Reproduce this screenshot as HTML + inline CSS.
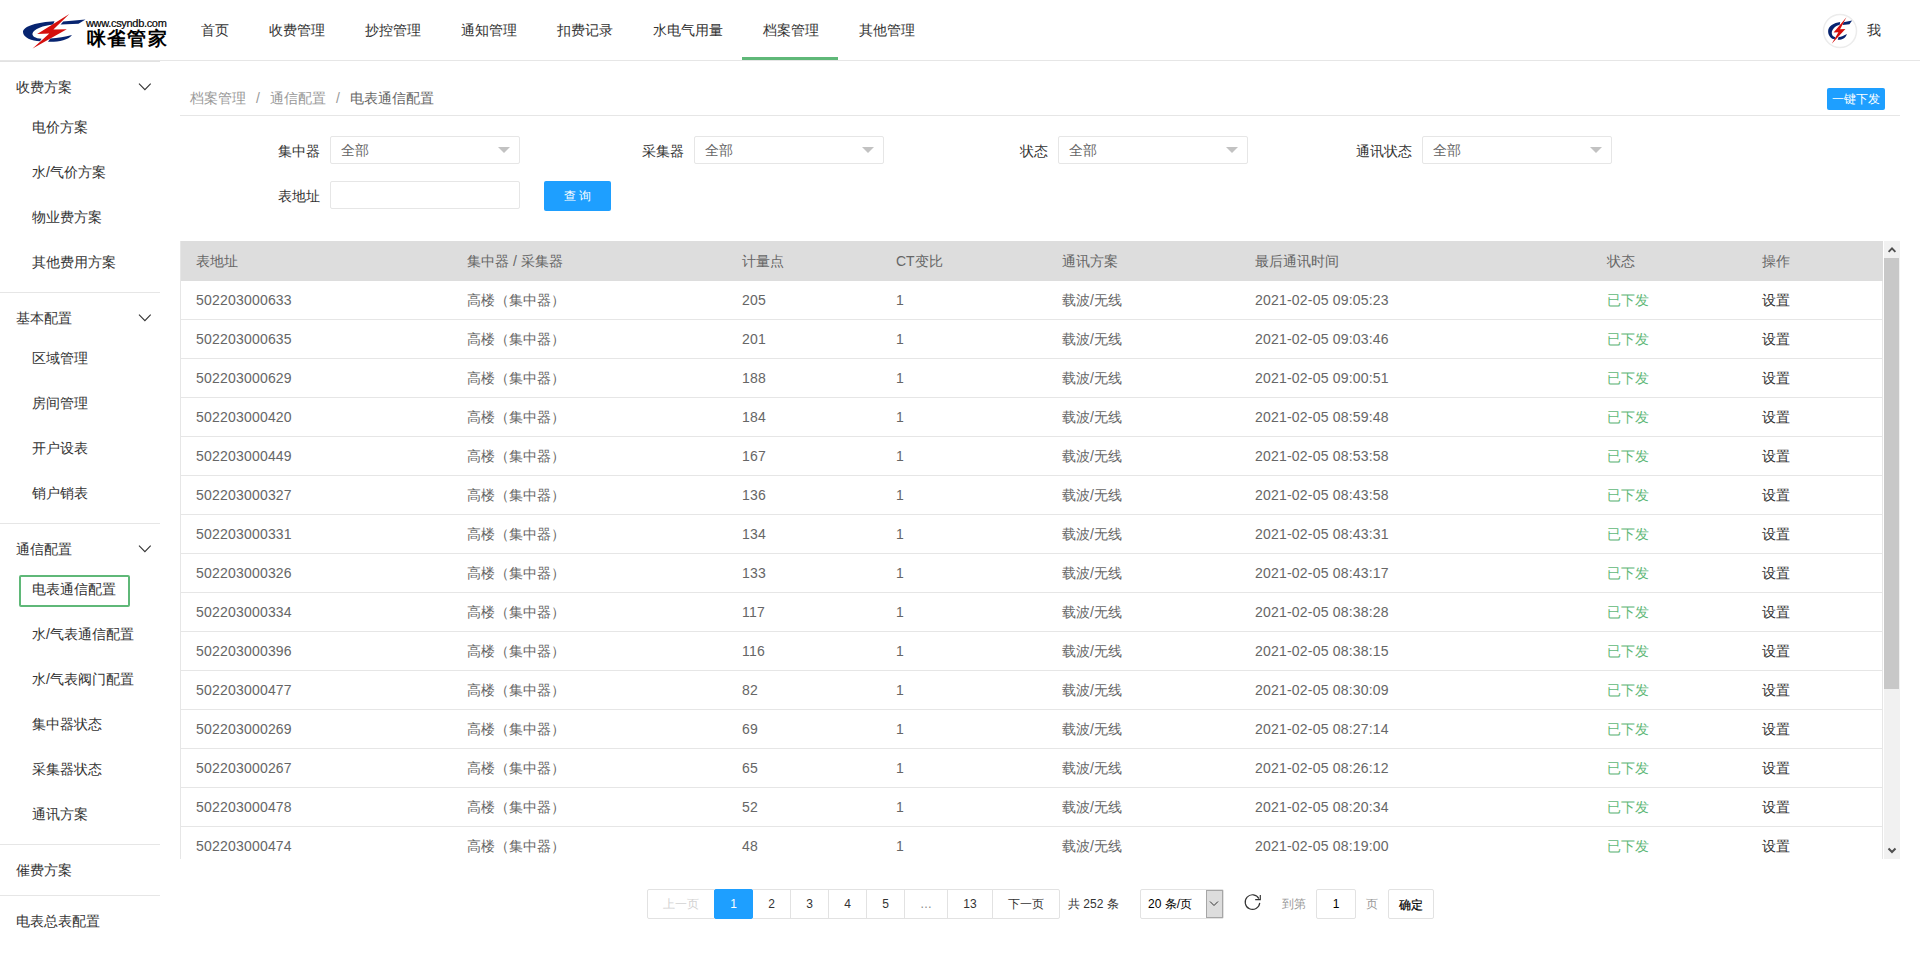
<!DOCTYPE html>
<html><head><meta charset="utf-8">
<style>
*{margin:0;padding:0;box-sizing:border-box}
html,body{width:1920px;height:966px;overflow:hidden;background:#fff;font-family:"Liberation Sans",sans-serif;font-size:14px;color:#333}
.a{position:absolute;white-space:nowrap}
.hdr{position:absolute;left:0;top:0;width:1920px;height:61px;border-bottom:1px solid #e6e6e6;background:#fff}
.nav{position:absolute;top:0;height:60px;line-height:60px;font-size:14px;color:#333}
.navline{position:absolute;left:742px;top:57px;width:96px;height:3px;background:#5fb878}
.side .h{position:absolute;left:16px;font-size:14px;color:#333;line-height:20px}
.side .s{position:absolute;left:32px;font-size:14px;color:#333;line-height:20px}
.side .sep{position:absolute;left:0;width:160px;height:1px;background:#e6e6e6}
.chev{position:absolute;left:138px;width:14px;height:8px;overflow:visible}
.lbl{position:absolute;font-size:14px;color:#333;line-height:20px;text-align:right;width:100px}
.sel{position:absolute;width:190px;height:28px;border:1px solid #e6e6e6;border-radius:2px;background:#fff}
.sel span{position:absolute;left:10px;top:3px;line-height:20px;color:#666;font-size:14px}
.sel i{position:absolute;right:9px;top:10px;width:0;height:0;border-left:6px solid transparent;border-right:6px solid transparent;border-top:6px solid #c2c2c2}
.th{position:absolute;top:241px;left:181px;width:1702px;height:40px;background:#dddddd}
.tt{position:absolute;line-height:20px;font-size:14px;color:#666}
.row{position:absolute;left:181px;width:1701px;height:39px;border-bottom:1px solid #e6e6e6}
.row div{position:absolute;top:9px;line-height:20px;color:#666;font-size:14px}
.pg{position:absolute;top:889px;height:30px;border:1px solid #e2e2e2;line-height:28px;font-size:12px;color:#333;text-align:center;background:#fff}
</style></head><body>
<!-- header -->
<div class="hdr"></div>
<div class="a" style="left:0;top:61px;width:160px;height:1px;background:#e2e2e2"></div>
<svg class="a" style="left:18px;top:10px" width="72" height="42" viewBox="0 0 72 42">
<path fill="#072470" d="M36.5 11.2 C20 12 5 16 5 22 C5 27.5 14 31.3 22 31.3 L23.6 28.8 C17 28.4 14 26 14.5 23.5 C15 19.2 26 15.2 35.2 14.4 Z"/>
<path fill="#072470" d="M30 31.7 C40 32 50 30.5 54 25 C47 26.6 40 28.2 32.3 28.6 Z"/>
<path fill="#072470" d="M45.2 11.4 L67.5 9.5 L60.5 13.7 L42.6 14.6 Z"/>
<path fill="#d40f0c" d="M51.3 4 L19.2 23.9 L31.3 23.5 L14.6 38.4 L48.8 19.2 L35.4 19.6 Z"/>
</svg>
<div class="a" style="left:86px;top:16px;font-size:11px;color:#000;line-height:14px;letter-spacing:-0.32px;-webkit-text-stroke:0.2px #000">www.csyndb.com</div>
<div class="a" style="left:87px;top:27.5px;font-size:18.5px;font-weight:bold;color:#000;line-height:22px;letter-spacing:1.2px">咪雀管家</div>

<div class="nav" style="left:201px">首页</div>
<div class="nav" style="left:269px">收费管理</div>
<div class="nav" style="left:365px">抄控管理</div>
<div class="nav" style="left:461px">通知管理</div>
<div class="nav" style="left:557px">扣费记录</div>
<div class="nav" style="left:653px">水电气用量</div>
<div class="nav" style="left:763px">档案管理</div>
<div class="nav" style="left:859px">其他管理</div>
<div class="navline"></div>

<svg class="a" style="left:1822px;top:13px" width="36" height="36" viewBox="0 0 36 36">
<circle cx="18" cy="18" r="16.5" fill="#fff" stroke="#ececec" stroke-width="1.5"/>
<g transform="matrix(0.384 0 0 0.86 4.2 -0.6)" fill="#072470">
<path d="M36.5 11.2 C20 12 5 16 5 22 C5 27.5 14 31.3 22 31.3 L23.6 28.8 C17 28.4 14 26 14.5 23.5 C15 19.2 26 15.2 35.2 14.4 Z"/>
<path d="M30 31.7 C40 32 50 30.5 54 25 C47 26.6 40 28.2 32.3 28.6 Z"/>
<path d="M45.2 11.4 L67.5 9.5 L60.5 13.7 L42.6 14.6 Z"/>
</g>
<g transform="matrix(0.4 0 0 0.77 3.9 1.2)"><path fill="#d40f0c" d="M51.3 4 L19.2 23.9 L31.3 23.5 L14.6 38.4 L48.8 19.2 L35.4 19.6 Z"/></g>
</svg>
<div class="a" style="left:1867px;top:20px;line-height:20px;font-size:14px;color:#333">我</div>

<!-- sidebar -->
<div class="side">
<div class="h" style="top:77px">收费方案</div>
<svg class="chev" style="top:83px" viewBox="0 0 14 8"><path d="M1 0.6 L6.9 6.6 L12.7 0.6" fill="none" stroke="#333" stroke-width="1.1"/></svg>
<div class="s" style="top:117px">电价方案</div>
<div class="s" style="top:162px">水/气价方案</div>
<div class="s" style="top:207px">物业费方案</div>
<div class="s" style="top:252px">其他费用方案</div>
<div class="sep" style="top:292px"></div>
<div class="h" style="top:308px">基本配置</div>
<svg class="chev" style="top:314px" viewBox="0 0 14 8"><path d="M1 0.6 L6.9 6.6 L12.7 0.6" fill="none" stroke="#333" stroke-width="1.1"/></svg>
<div class="s" style="top:348px">区域管理</div>
<div class="s" style="top:393px">房间管理</div>
<div class="s" style="top:438px">开户设表</div>
<div class="s" style="top:483px">销户销表</div>
<div class="sep" style="top:523px"></div>
<div class="h" style="top:539px">通信配置</div>
<svg class="chev" style="top:545px" viewBox="0 0 14 8"><path d="M1 0.6 L6.9 6.6 L12.7 0.6" fill="none" stroke="#333" stroke-width="1.1"/></svg>
<div class="a" style="left:19px;top:575px;width:111px;height:32px;border:2px solid #5fb878;border-radius:2px"></div>
<div class="s" style="top:579px">电表通信配置</div>
<div class="s" style="top:624px">水/气表通信配置</div>
<div class="s" style="top:669px">水/气表阀门配置</div>
<div class="s" style="top:714px">集中器状态</div>
<div class="s" style="top:759px">采集器状态</div>
<div class="s" style="top:804px">通讯方案</div>
<div class="sep" style="top:844px"></div>
<div class="h" style="top:860px">催费方案</div>
<div class="sep" style="top:895px"></div>
<div class="h" style="top:911px">电表总表配置</div>
</div>

<!-- breadcrumb -->
<div class="a" style="left:190px;top:88px;line-height:20px;font-size:14px;color:#999">档案管理<span style="margin:0 10px">/</span>通信配置<span style="margin:0 10px">/</span><span style="color:#666">电表通信配置</span></div>
<div class="a" style="left:180px;top:115px;width:1720px;height:1px;background:#e6e6e6"></div>
<div class="a" style="left:1827px;top:88px;width:58px;height:22px;background:#1e9fff;border-radius:2px;color:#fff;font-size:12px;line-height:22px;text-align:center">一键下发</div>

<!-- form -->
<div class="lbl" style="left:220px;top:141px">集中器</div>
<div class="sel" style="left:330px;top:136px"><span>全部</span><i></i></div>
<div class="lbl" style="left:584px;top:141px">采集器</div>
<div class="sel" style="left:694px;top:136px"><span>全部</span><i></i></div>
<div class="lbl" style="left:948px;top:141px">状态</div>
<div class="sel" style="left:1058px;top:136px"><span>全部</span><i></i></div>
<div class="lbl" style="left:1312px;top:141px">通讯状态</div>
<div class="sel" style="left:1422px;top:136px"><span>全部</span><i></i></div>
<div class="lbl" style="left:220px;top:186px">表地址</div>
<div class="sel" style="left:330px;top:181px"></div>
<div class="a" style="left:544px;top:181px;width:67px;height:30px;background:#1e9fff;border-radius:2px;color:#fff;font-size:12px;line-height:30px;text-align:center">查 询</div>

<!-- table -->
<div id="tbl"><div class="th"></div>
<div class="a" style="left:180px;top:241px;width:1px;height:618px;background:#e6e6e6"></div>
<div class="a" style="left:1882px;top:281px;width:1px;height:578px;background:#e6e6e6"></div>
<div class="tt a" style="left:196px;top:251px">表地址</div>
<div class="tt a" style="left:467px;top:251px">集中器 / 采集器</div>
<div class="tt a" style="left:742px;top:251px">计量点</div>
<div class="tt a" style="left:896px;top:251px">CT变比</div>
<div class="tt a" style="left:1062px;top:251px">通讯方案</div>
<div class="tt a" style="left:1255px;top:251px">最后通讯时间</div>
<div class="tt a" style="left:1607px;top:251px">状态</div>
<div class="tt a" style="left:1762px;top:251px">操作</div>
<div class="a" style="left:181px;top:281px;width:1701px;height:578px;overflow:hidden">
<div class="row" style="left:0;top:0px"><div style="left:15px;letter-spacing:0.2px">502203000633</div><div style="left:286px">高楼（集中器）</div><div style="left:561px;letter-spacing:0.2px">205</div><div style="left:715px;letter-spacing:0.2px">1</div><div style="left:881px">载波/无线</div><div style="left:1074px;letter-spacing:0.2px">2021-02-05 09:05:23</div><div style="left:1426px"><span style="color:#5fb878">已下发</span></div><div style="left:1581px"><span style="color:#333">设置</span></div></div>
<div class="row" style="left:0;top:39px"><div style="left:15px;letter-spacing:0.2px">502203000635</div><div style="left:286px">高楼（集中器）</div><div style="left:561px;letter-spacing:0.2px">201</div><div style="left:715px;letter-spacing:0.2px">1</div><div style="left:881px">载波/无线</div><div style="left:1074px;letter-spacing:0.2px">2021-02-05 09:03:46</div><div style="left:1426px"><span style="color:#5fb878">已下发</span></div><div style="left:1581px"><span style="color:#333">设置</span></div></div>
<div class="row" style="left:0;top:78px"><div style="left:15px;letter-spacing:0.2px">502203000629</div><div style="left:286px">高楼（集中器）</div><div style="left:561px;letter-spacing:0.2px">188</div><div style="left:715px;letter-spacing:0.2px">1</div><div style="left:881px">载波/无线</div><div style="left:1074px;letter-spacing:0.2px">2021-02-05 09:00:51</div><div style="left:1426px"><span style="color:#5fb878">已下发</span></div><div style="left:1581px"><span style="color:#333">设置</span></div></div>
<div class="row" style="left:0;top:117px"><div style="left:15px;letter-spacing:0.2px">502203000420</div><div style="left:286px">高楼（集中器）</div><div style="left:561px;letter-spacing:0.2px">184</div><div style="left:715px;letter-spacing:0.2px">1</div><div style="left:881px">载波/无线</div><div style="left:1074px;letter-spacing:0.2px">2021-02-05 08:59:48</div><div style="left:1426px"><span style="color:#5fb878">已下发</span></div><div style="left:1581px"><span style="color:#333">设置</span></div></div>
<div class="row" style="left:0;top:156px"><div style="left:15px;letter-spacing:0.2px">502203000449</div><div style="left:286px">高楼（集中器）</div><div style="left:561px;letter-spacing:0.2px">167</div><div style="left:715px;letter-spacing:0.2px">1</div><div style="left:881px">载波/无线</div><div style="left:1074px;letter-spacing:0.2px">2021-02-05 08:53:58</div><div style="left:1426px"><span style="color:#5fb878">已下发</span></div><div style="left:1581px"><span style="color:#333">设置</span></div></div>
<div class="row" style="left:0;top:195px"><div style="left:15px;letter-spacing:0.2px">502203000327</div><div style="left:286px">高楼（集中器）</div><div style="left:561px;letter-spacing:0.2px">136</div><div style="left:715px;letter-spacing:0.2px">1</div><div style="left:881px">载波/无线</div><div style="left:1074px;letter-spacing:0.2px">2021-02-05 08:43:58</div><div style="left:1426px"><span style="color:#5fb878">已下发</span></div><div style="left:1581px"><span style="color:#333">设置</span></div></div>
<div class="row" style="left:0;top:234px"><div style="left:15px;letter-spacing:0.2px">502203000331</div><div style="left:286px">高楼（集中器）</div><div style="left:561px;letter-spacing:0.2px">134</div><div style="left:715px;letter-spacing:0.2px">1</div><div style="left:881px">载波/无线</div><div style="left:1074px;letter-spacing:0.2px">2021-02-05 08:43:31</div><div style="left:1426px"><span style="color:#5fb878">已下发</span></div><div style="left:1581px"><span style="color:#333">设置</span></div></div>
<div class="row" style="left:0;top:273px"><div style="left:15px;letter-spacing:0.2px">502203000326</div><div style="left:286px">高楼（集中器）</div><div style="left:561px;letter-spacing:0.2px">133</div><div style="left:715px;letter-spacing:0.2px">1</div><div style="left:881px">载波/无线</div><div style="left:1074px;letter-spacing:0.2px">2021-02-05 08:43:17</div><div style="left:1426px"><span style="color:#5fb878">已下发</span></div><div style="left:1581px"><span style="color:#333">设置</span></div></div>
<div class="row" style="left:0;top:312px"><div style="left:15px;letter-spacing:0.2px">502203000334</div><div style="left:286px">高楼（集中器）</div><div style="left:561px;letter-spacing:0.2px">117</div><div style="left:715px;letter-spacing:0.2px">1</div><div style="left:881px">载波/无线</div><div style="left:1074px;letter-spacing:0.2px">2021-02-05 08:38:28</div><div style="left:1426px"><span style="color:#5fb878">已下发</span></div><div style="left:1581px"><span style="color:#333">设置</span></div></div>
<div class="row" style="left:0;top:351px"><div style="left:15px;letter-spacing:0.2px">502203000396</div><div style="left:286px">高楼（集中器）</div><div style="left:561px;letter-spacing:0.2px">116</div><div style="left:715px;letter-spacing:0.2px">1</div><div style="left:881px">载波/无线</div><div style="left:1074px;letter-spacing:0.2px">2021-02-05 08:38:15</div><div style="left:1426px"><span style="color:#5fb878">已下发</span></div><div style="left:1581px"><span style="color:#333">设置</span></div></div>
<div class="row" style="left:0;top:390px"><div style="left:15px;letter-spacing:0.2px">502203000477</div><div style="left:286px">高楼（集中器）</div><div style="left:561px;letter-spacing:0.2px">82</div><div style="left:715px;letter-spacing:0.2px">1</div><div style="left:881px">载波/无线</div><div style="left:1074px;letter-spacing:0.2px">2021-02-05 08:30:09</div><div style="left:1426px"><span style="color:#5fb878">已下发</span></div><div style="left:1581px"><span style="color:#333">设置</span></div></div>
<div class="row" style="left:0;top:429px"><div style="left:15px;letter-spacing:0.2px">502203000269</div><div style="left:286px">高楼（集中器）</div><div style="left:561px;letter-spacing:0.2px">69</div><div style="left:715px;letter-spacing:0.2px">1</div><div style="left:881px">载波/无线</div><div style="left:1074px;letter-spacing:0.2px">2021-02-05 08:27:14</div><div style="left:1426px"><span style="color:#5fb878">已下发</span></div><div style="left:1581px"><span style="color:#333">设置</span></div></div>
<div class="row" style="left:0;top:468px"><div style="left:15px;letter-spacing:0.2px">502203000267</div><div style="left:286px">高楼（集中器）</div><div style="left:561px;letter-spacing:0.2px">65</div><div style="left:715px;letter-spacing:0.2px">1</div><div style="left:881px">载波/无线</div><div style="left:1074px;letter-spacing:0.2px">2021-02-05 08:26:12</div><div style="left:1426px"><span style="color:#5fb878">已下发</span></div><div style="left:1581px"><span style="color:#333">设置</span></div></div>
<div class="row" style="left:0;top:507px"><div style="left:15px;letter-spacing:0.2px">502203000478</div><div style="left:286px">高楼（集中器）</div><div style="left:561px;letter-spacing:0.2px">52</div><div style="left:715px;letter-spacing:0.2px">1</div><div style="left:881px">载波/无线</div><div style="left:1074px;letter-spacing:0.2px">2021-02-05 08:20:34</div><div style="left:1426px"><span style="color:#5fb878">已下发</span></div><div style="left:1581px"><span style="color:#333">设置</span></div></div>
<div class="row" style="left:0;top:546px"><div style="left:15px;letter-spacing:0.2px">502203000474</div><div style="left:286px">高楼（集中器）</div><div style="left:561px;letter-spacing:0.2px">48</div><div style="left:715px;letter-spacing:0.2px">1</div><div style="left:881px">载波/无线</div><div style="left:1074px;letter-spacing:0.2px">2021-02-05 08:19:00</div><div style="left:1426px"><span style="color:#5fb878">已下发</span></div><div style="left:1581px"><span style="color:#333">设置</span></div></div>
</div>
<div class="a" style="left:1884px;top:241px;width:16px;height:618px;background:#f1f1f1"></div>
<div class="a" style="left:1884px;top:258px;width:15px;height:431px;background:#c8c8c8"></div>
<svg class="a" style="left:1884px;top:241px" width="16" height="17" viewBox="0 0 16 17"><path d="M4.6 10.8 L8 7.4 L11.4 10.8" fill="none" stroke="#505050" stroke-width="1.9"/></svg>
<svg class="a" style="left:1884px;top:842px" width="16" height="17" viewBox="0 0 16 17"><path d="M4.5 6.5 L8 10 L11.5 6.5" fill="none" stroke="#505050" stroke-width="2"/></svg></div><!--/tbl-->

<!-- pagination -->
<div id="pager"><div class="pg" style="left:647px;width:68px;border-radius:2px 0 0 2px"><span style="color:#d2d2d2">上一页</span></div>
<div class="pg" style="left:714px;width:39px;background:#1e9fff;border-color:#1e9fff;color:#fff;border-radius:2px;z-index:2">1</div>
<div class="pg" style="left:752px;width:39px">2</div>
<div class="pg" style="left:790px;width:39px">3</div>
<div class="pg" style="left:828px;width:39px">4</div>
<div class="pg" style="left:866px;width:39px">5</div>
<div class="pg" style="left:904px;width:44px"><span style="color:#888">…</span></div>
<div class="pg" style="left:947px;width:46px">13</div>
<div class="pg" style="left:992px;width:68px;border-radius:0 2px 2px 0">下一页</div>
<div class="a" style="left:1068px;top:894px;line-height:20px;font-size:12px;color:#333">共 252 条</div>
<div class="a" style="left:1140px;top:889px;width:84px;height:30px;border:1px solid #e2e2e2;border-radius:2px;background:#fff"></div>
<div class="a" style="left:1148px;top:894px;line-height:20px;font-size:12px;color:#000">20 条/页</div>
<div class="a" style="left:1206px;top:890px;width:17px;height:28px;background:#dddddd;border:1px solid #a6a6a6"></div>
<svg class="a" style="left:1206px;top:890px" width="17" height="28" viewBox="0 0 17 28"><path d="M4 11.5 L8 15.5 L12 11.5" fill="none" stroke="#333" stroke-width="1"/></svg>
<svg class="a" style="left:1243px;top:893px" width="19" height="19" viewBox="0 0 19 19"><path d="M16.75 9.9 A7.3 7.3 0 1 1 15.9 5.6" fill="none" stroke="#333" stroke-width="1.15"/><path d="M17.3 2 L17.3 6.6 L12.2 6.6" fill="none" stroke="#333" stroke-width="1.15"/></svg>
<div class="a" style="left:1282px;top:894px;line-height:20px;font-size:12px;color:#999">到第</div>
<div class="a" style="left:1316px;top:889px;width:40px;height:30px;border:1px solid #e2e2e2;border-radius:2px;line-height:28px;text-align:center;font-size:12px;color:#000">1</div>
<div class="a" style="left:1366px;top:894px;line-height:20px;font-size:12px;color:#999">页</div>
<div class="a" style="left:1388px;top:889px;width:46px;height:30px;border:1px solid #e2e2e2;border-radius:2px;line-height:30px;text-align:center;font-size:12px;color:#000;-webkit-text-stroke:0.2px #000">确定</div></div><!--/pager-->
</body></html>
